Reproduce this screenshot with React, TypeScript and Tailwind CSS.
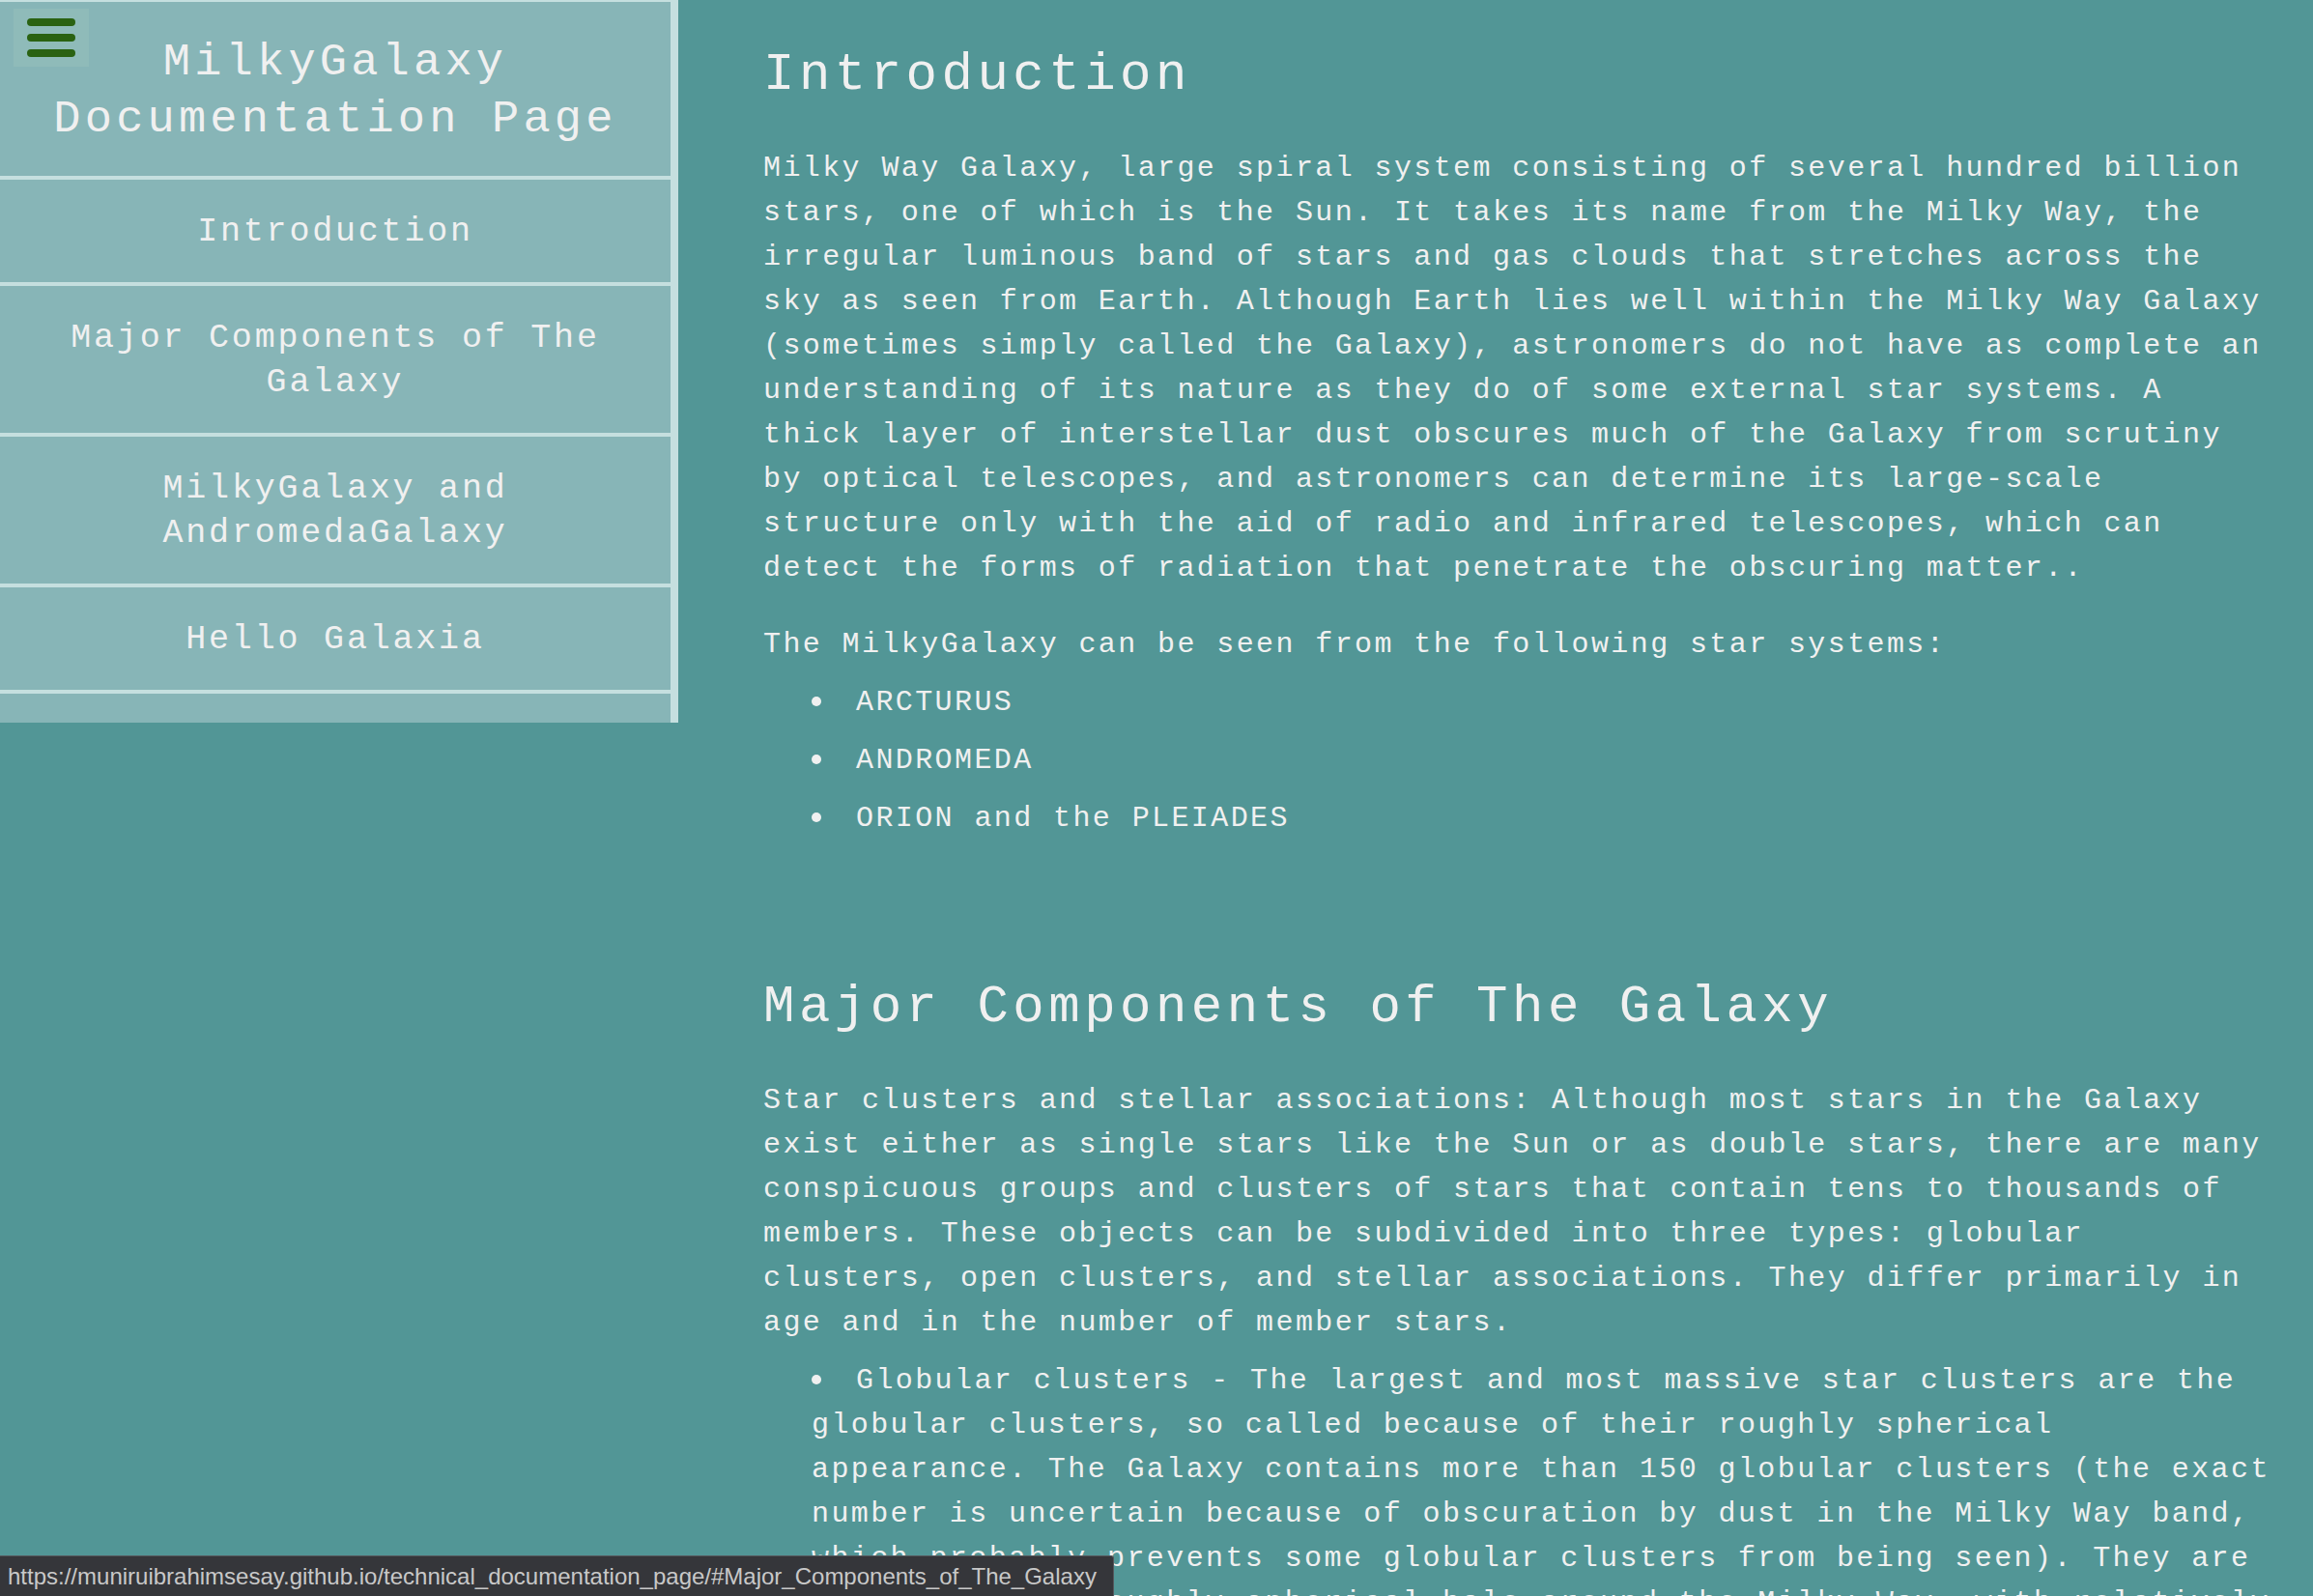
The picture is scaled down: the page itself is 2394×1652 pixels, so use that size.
import React from 'react';

const mono = { fontFamily: '"Liberation Mono", "DejaVu Sans Mono", monospace' };

const navItems = [
  ['Introduction'],
  ['Major Components of The', 'Galaxy'],
  ['MilkyGalaxy and', 'AndromedaGalaxy'],
  ['Hello Galaxia'],
];

const Bullet: React.FC = () => (
  <span className="inline-block w-[46px]">
    <span className="inline-block w-[10px] h-[10px] rounded-full bg-[#f0f0f0] align-[4px]" />
  </span>
);

const Sidebar: React.FC = () => {
  return (
    <nav className="relative w-[702px] shrink-0 self-start bg-[#87b5b7] border-t-2 border-r-8 border-[#c5dfdf] pb-[30px]">
      <button className="absolute left-[14px] top-[7px] w-[78px] h-[60px] bg-[#8fbbb9] flex flex-col items-center justify-center gap-[8px]">
        <span className="block w-[50px] h-[8px] rounded-full bg-[#2a6212]" />
        <span className="block w-[50px] h-[8px] rounded-full bg-[#2a6212]" />
        <span className="block w-[50px] h-[8px] rounded-full bg-[#2a6212]" />
      </button>
      <header className="pt-[33px] pb-[29px] text-center text-[47px] leading-[59px] tracking-[4.2px] text-[#f0f0f0] border-b-4 border-[#c5dfdf]">
        MilkyGalaxy
        <br />
        Documentation Page
      </header>
      <ul>
        {navItems.map((lines, i) => (
          <li
            key={i}
            className="pt-[31px] pb-[29px] text-center text-[35px] leading-[46px] tracking-[2.8px] text-[#f0f0f0] border-b-4 border-[#c5dfdf]"
          >
            {lines.map((l, j) => (
              <div key={j}>{l}</div>
            ))}
          </li>
        ))}
      </ul>
    </nav>
  );
};

const App: React.FC = () => {
  return (
    <div className="h-screen overflow-hidden bg-[#529696] text-[#f0f0f0] flex" style={mono}>
      <Sidebar />

      <main className="flex-1 pl-[88px] pt-[46px]">
        <div className="w-[1565px] text-[30px] leading-[46px] tracking-[2.4px]">
          <section>
            <h2 className="text-[54px] leading-[64px] tracking-[4.5px] mb-[41px]">Introduction</h2>
            <p>
              Milky Way Galaxy, large spiral system consisting of several hundred billion stars, one of which is the
              Sun. It takes its name from the Milky Way, the irregular luminous band of stars and gas clouds that
              stretches across the sky as seen from Earth. Although Earth lies well within the Milky Way Galaxy
              (sometimes simply called the Galaxy), astronomers do not have as complete an understanding of its nature
              as they do of some external star systems. A thick layer of interstellar dust obscures much of the Galaxy
              from scrutiny by optical telescopes, and astronomers can determine its large-scale structure only with the
              aid of radio and infrared telescopes, which can detect the forms of radiation that penetrate the obscuring
              matter..
            </p>
            <p className="mt-[33px]">The MilkyGalaxy can be seen from the following star systems:</p>
            <ul className="mt-[14px] pl-[50px] flex flex-col gap-[14px]">
              <li>
                <Bullet />
                ARCTURUS
              </li>
              <li>
                <Bullet />
                ANDROMEDA
              </li>
              <li>
                <Bullet />
                ORION and the PLEIADES
              </li>
            </ul>
          </section>

          <section className="mt-[141px]">
            <h2 className="text-[54px] leading-[64px] tracking-[4.5px] mb-[41px]">Major Components of The Galaxy</h2>
            <p>
              Star clusters and stellar associations: Although most stars in the Galaxy exist either as single stars
              like the Sun or as double stars, there are many conspicuous groups and clusters of stars that contain tens
              to thousands of members. These objects can be subdivided into three types: globular clusters, open
              clusters, and stellar associations. They differ primarily in age and in the number of member stars.
            </p>
            <ul className="mt-[14px] pl-[50px] flex flex-col gap-[14px]">
              <li>
                <Bullet />
                Globular clusters - The largest and most massive star clusters are the globular clusters, so called
                because of their roughly spherical appearance. The Galaxy contains more than 150 globular clusters (the
                exact number is uncertain because of obscuration by dust in the Milky Way band, which probably prevents
                some globular clusters from being seen). They are arranged in a roughly spherical halo around the Milky
                Way, with relatively high concentration toward the galactic centre.
              </li>
              <li>
                <Bullet />
                Open clusters - Open clusters are found in the disk of the Galaxy.
              </li>
            </ul>
          </section>
        </div>
      </main>

      <div
        className="fixed left-0 bottom-0 w-[1153px] h-[42px] bg-[#35363a] border-t border-r border-[#55575c] rounded-tr-[3px] pl-[8px] flex items-center text-[24px] text-[#c8c8c8] tracking-normal"
        style={{ fontFamily: '"Liberation Sans", Arial, sans-serif' }}
      >
        https://muniruibrahimsesay.github.io/technical_documentation_page/#Major_Components_of_The_Galaxy
      </div>
    </div>
  );
};

export default App;
